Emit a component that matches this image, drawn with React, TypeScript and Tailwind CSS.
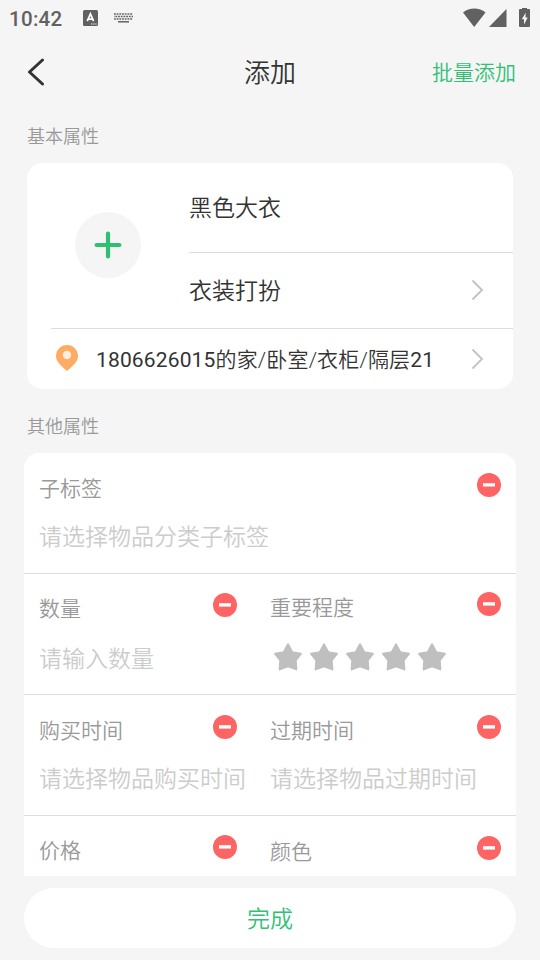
import { useState } from "react";
import clsx from "clsx";

type Field = {
    id: string;
    label: string;
    placeholder?: string;
    rating?: boolean;
    className: string;
    valueClassName?: string;
}

const rows: Field[][] = [
    [
        { id: "tag", label: "子标签", placeholder: "请选择物品分类子标签", className: "flex-1 pt-5 pr-[15px]", valueClassName: "mt-[17px]" },
    ],
    [
        { id: "count", label: "数量", placeholder: "请输入数量", className: "w-[231px] pt-[19px] pr-[18px]", valueClassName: "mt-[19px]" },
        { id: "importance", label: "重要程度", rating: true, className: "flex-1 pt-[18px] pr-[15px]" },
    ],
    [
        { id: "bought", label: "购买时间", placeholder: "请选择物品购买时间", className: "w-[231px] pt-5 pr-[18px]", valueClassName: "mt-[17px]" },
        { id: "expires", label: "过期时间", placeholder: "请选择物品过期时间", className: "flex-1 pt-5 pr-[15px]", valueClassName: "mt-[17px]" },
    ],
    [
        { id: "price", label: "价格", className: "w-[231px] pt-[19px] pr-[18px]" },
        { id: "color", label: "颜色", className: "flex-1 pt-5 pr-[15px]" },
    ],
]

function StatusBar() {
    return (
        <div className="flex h-9 shrink-0 items-center pl-[9px] text-[#616161]">
            <span className="w-[74px] pt-0.5 font-[Roboto,sans-serif] text-[20.5px] leading-6 font-medium tracking-[0.3px]">10:42</span>
            <svg width="15" height="16" viewBox="0 0 15 16">
                <rect width="15" height="16" rx="1.5" fill="currentColor" />
                <path d="M4.200 11.200 7.400 4 10.600 11.200M5.300 9.200h4.200" fill="none" stroke="#fff" strokeWidth="1.8" />
                <path d="M8 13.400h1.400v1.200H8zM10.300 13.400h1.400v1.200h-1.400zM12.400 13.400h1.200v1.200h-1.200z" fill="#fff" />
            </svg>
            <svg className="ml-4" width="19" height="10" viewBox="0 0 19 10">
                <g stroke="currentColor" strokeWidth="1.5" fill="none">
                    <path d="M0 .9h19" strokeDasharray="1.8 .9" />
                    <path d="M0 3.500h19" strokeDasharray="1.8 .9" strokeDashoffset="1.3" />
                    <path d="M0 6.100h19" strokeDasharray="1.8 .9" />
                    <path d="M4 8.800h11" />
                </g>
            </svg>
            <svg className="mr-2.5 ml-auto" width="67" height="20" viewBox="0 0 67 20" fill="currentColor">
                <path d="M0 4C6-1.300 16.500-1.300 22.500 4L11.200 18.500Z" transform="translate(0 .5)" />
                <path d="M43.500 1V19H26Z" />
                <path d="M59 1h-2q-1 0-1 1V18q0 1 1 1h9q1 0 1-1V2q0-1-1-1h-2V0h-5Z" />
                <path d="M62.700 4.800 58.800 11.200h2.200V16.500L64.700 9.500h-2.200Z" fill="#f5f5f5" />
            </svg>
        </div>
    )
}

function ChevronRight() {
    return (
        <svg width="13" height="22" viewBox="0 0 13 22" fill="none" stroke="#c2c2c2" strokeWidth="1.8">
            <path d="M1.500 1.500 11 11 1.500 20.500" />
        </svg>
    )
}

function Star({ active }: { active: boolean }) {
    return (
        <svg width="30" height="30" viewBox="0 0 30 30" fill={active ? "#ffb400" : "#bfbfbf"} stroke={active ? "#ffb400" : "#bfbfbf"} strokeWidth="2" strokeLinejoin="round">
            <path d="M15 2.400 19.300 10.200 28 11.700 22.700 18.400 23.400 27.400 15 24.400 6.600 27.400 7.300 18.400 2 11.700 10.700 10.200Z" />
        </svg>
    )
}

function FieldCell({ field, onRemove }: { field: Field, onRemove: (id: string) => void }) {
    const [rating, setRating] = useState<number>(0);

    return (
        <div className={clsx("pl-[15px]", field.className)}>
            <div className="flex h-8 items-start justify-between">
                <span className="text-[21px] leading-[33px] text-[#999]">{field.label}</span>
                <button onClick={() => onRemove(field.id)}>
                    <svg width="24" height="24" viewBox="0 0 24 24">
                        <circle cx="12" cy="12" r="12" fill="#ff6464" />
                        <path d="M6 11.900h12" stroke="#fff" strokeWidth="3.4" />
                    </svg>
                </button>
            </div>
            {field.placeholder && (
                <p className={clsx("text-[23px] leading-8 whitespace-nowrap text-[#ccc]", field.valueClassName)}>{field.placeholder}</p>
            )}
            {field.rating && (
                <div className="mt-[18px] ml-[3px] flex gap-1.5">
                    {[1, 2, 3, 4, 5].map(n => (
                        <button key={n} onClick={() => setRating(n)}><Star active={n <= rating} /></button>
                    ))}
                </div>
            )}
        </div>
    )
}

export default function App() {
    const [fields, setFields] = useState<Field[][]>(rows);

    const removeField = (id: string) => {
        setFields(fields.map(row => row.filter(field => field.id !== id)).filter(row => row.length > 0));
    }

    return (
        <div className="flex h-[960px] w-[540px] flex-col overflow-hidden bg-[#f5f5f5] font-[Roboto,'Noto_Sans_CJK_SC',sans-serif] font-[350] text-[#333]">
            <StatusBar />

            <header className="grid h-[72px] shrink-0 grid-cols-3 items-center pr-6 pl-[27px]">
                <button>
                    <svg width="18" height="28" viewBox="0 0 18 28" fill="none" stroke="#333" strokeWidth="3" strokeLinecap="round" strokeLinejoin="round">
                        <path d="M15.500 2 2.500 14 15.500 26" />
                    </svg>
                </button>
                <h1 className="pt-0.5 pr-[3px] text-center text-[26px] leading-9">添加</h1>
                <button className="justify-self-end pt-px text-[21px] leading-8 text-[#33bf75]">批量添加</button>
            </header>

            <h2 className="mt-[17px] ml-[27px] text-[18px] leading-6 text-[#999]">基本属性</h2>

            <section className="mx-[27px] mt-3.5 h-[226px] shrink-0 rounded-[15px] bg-white">
                <div className="flex h-[165px]">
                    <div className="flex w-[162px] items-center justify-center pb-0.5">
                        <button className="flex size-[66px] items-center justify-center rounded-full bg-[#f5f5f5]">
                            <svg width="28" height="28" viewBox="0 0 28 28" stroke="#2fbf71" strokeWidth="4.200" strokeLinecap="round">
                                <path d="M14 2.600V25.400M2.600 14H25.400" />
                            </svg>
                        </button>
                    </div>
                    <div className="flex-1 text-[23px]">
                        <div className="flex h-[90px] items-center border-b border-[#ddd] pt-1">黑色大衣</div>
                        <div className="flex h-[75px] items-center justify-between pr-[29px] pb-px">
                            <span className="pt-1">衣装打扮</span>
                            <ChevronRight />
                        </div>
                    </div>
                </div>
                <div className="ml-6 flex h-[61px] items-center border-t border-[#ddd] pr-[29px] pl-[5px]">
                    <svg className="mb-0.5" width="22" height="26" viewBox="0 0 22 26">
                        <path d="M11 0A11 11 0 0 0 0 11C0 16 3.500 19.500 11 26 18.500 19.500 22 16 22 11A11 11 0 0 0 11 0Z" fill="#ffac62" />
                        <circle cx="11" cy="10" r="4.200" fill="#ffeee0" />
                    </svg>
                    <span className="ml-[18px] flex-1 pt-[3px] text-[21px] tracking-[0.15px]">
                        <span className="font-normal">1806626015</span>的家/卧室/衣柜/隔层<span className="font-normal">21</span>
                    </span>
                    <ChevronRight />
                </div>
            </section>

            <h2 className="mt-[26px] ml-[27px] text-[18px] leading-6 text-[#999]">其他属性</h2>

            <section className="mx-6 mt-3.5 h-[423px] shrink-0 overflow-hidden rounded-t-[15px] bg-white">
                {fields.map(row => (
                    <div key={row[0].id} className="flex h-[121px] border-b border-[#ddd]">
                        {row.map(field => (<FieldCell key={field.id} field={field} onRemove={removeField} />))}
                    </div>
                ))}
            </section>

            <button className="mx-6 mt-3 h-[60px] shrink-0 rounded-full bg-white pt-1 text-[23px] text-[#33bf75]">完成</button>
        </div>
    )
}
